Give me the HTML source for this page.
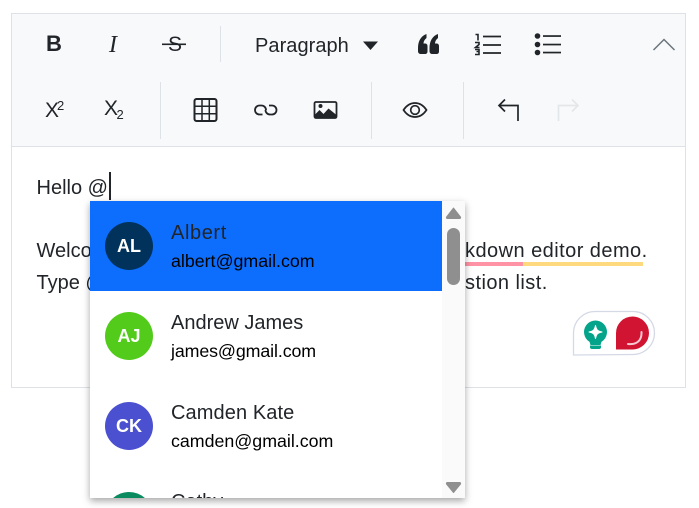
<!DOCTYPE html>
<html>
<head>
<meta charset="utf-8">
<style>
html,body{margin:0;padding:0;background:#fff;}
body{width:699px;height:508px;overflow:hidden;position:relative;font-family:"Liberation Sans",sans-serif;color:#212529;}
.a{position:absolute;white-space:nowrap;}
.t{font-size:20px;line-height:24px;color:#212529;}
.sep{position:absolute;width:1px;background:#dee2e6;}
.name{position:absolute;left:171px;font-size:20px;line-height:24px;color:#212529;white-space:nowrap;}
.mail{position:absolute;left:171px;font-size:17.8px;line-height:20px;color:#000;white-space:nowrap;}
.av{position:absolute;left:105px;width:48px;height:48px;border-radius:50%;color:#fff;font-weight:bold;font-size:18px;line-height:48px;text-align:center;}
svg{position:absolute;overflow:hidden;}
</style>
</head>
<body>
<div class="a" style="left:11px;top:13px;width:673px;height:373px;border:1px solid #dee2e6;"></div>
<div class="a" style="left:12px;top:14px;width:673px;height:132px;background:#f8f9fa;border-bottom:1px solid #dee2e6;"></div>

<div class="sep" style="left:220px;top:26px;height:36px;"></div>
<div class="sep" style="left:160px;top:82px;height:57px;"></div>
<div class="sep" style="left:371px;top:82px;height:57px;"></div>
<div class="sep" style="left:463px;top:82px;height:57px;"></div>

<div class="a" style="left:46px;top:32px;font-size:22px;line-height:24px;font-weight:bold;">B</div>
<div class="a" style="left:109px;top:32px;font-family:'Liberation Serif',serif;font-style:italic;font-size:24px;line-height:26px;">I</div>
<div class="a" style="left:168px;top:33px;font-size:21px;line-height:24px;">S</div>
<svg style="left:0;top:0" width="699" height="200">
  <rect x="162" y="43.5" width="24" height="1.6" fill="#212529"/>
  <!-- dropdown caret -->
  <path d="M363 41.5h15l-7.500 8.500z" fill="#212529"/>
  <!-- quote -->
  <path d="M418 48c0-7 3-12 8.500-14v4c-2 1.500-3 3.500-3 5.500h1.500c1.500 0 2.500 1 2.500 2.500v5.500c0 1.500-1 2.500-2.500 2.500h-4c-1.800 0-3-1-3-3z" fill="#212529"/>
  <path d="M429.500 48c0-7 3-12 8.500-14v4c-2 1.500-3 3.500-3 5.500h1.500c1.500 0 2.500 1 2.500 2.500v5.500c0 1.500-1 2.500-2.500 2.500h-4c-1.800 0-3-1-3-3z" fill="#212529"/>
  <!-- ol -->
  <g stroke="#212529" stroke-width="1.700" fill="none">
    <path d="M483 36.500h18M483 45h18M483 53h18"/>
    <path d="M475.500 34.500h2.500v6M475 42.500h4v2l-3.500 3h4M475 49.500h4v2h-2.500M477 51.500h2v3h-4" stroke-width="1.600"/>
  </g>
  <!-- ul -->
  <g fill="#212529">
    <circle cx="537.500" cy="36" r="2.800"/><circle cx="537.500" cy="44.500" r="2.800"/><circle cx="537.500" cy="52.500" r="2.800"/>
    <rect x="543" y="35.200" width="18" height="1.700"/><rect x="543" y="43.700" width="18" height="1.700"/><rect x="543" y="51.700" width="18" height="1.700"/>
  </g>
  <!-- chevron -->
  <path d="M653.500 50L664 39.500 674.500 50" fill="none" stroke="#6c757d" stroke-width="1.500"/>
  <!-- table -->
  <g fill="none" stroke="#212529">
    <rect x="194.500" y="99" width="22" height="22" rx="2" stroke-width="2"/>
    <path d="M202 99v22M209.300 99v22M194.500 106.300h22M194.500 113.700h22" stroke-width="1.500"/>
  </g>
  <!-- link -->
  <g fill="none" stroke="#212529" stroke-width="1.800">
    <path d="M266 110a4.500 4.500 0 0 0-4.500-4.500h-2a4.500 4.500 0 0 0 0 9h3"/>
    <path d="M265.500 110a4.500 4.500 0 0 0 4.500 4.500h2a4.500 4.500 0 0 0 0-9h-3"/>
  </g>
  <!-- image -->
  <rect x="314.500" y="102" width="22" height="16" rx="1.500" fill="none" stroke="#212529" stroke-width="1.800"/>
  <circle cx="320.500" cy="106" r="2" fill="#212529"/>
  <path d="M314.500 118v-3l5-5 4 4 5-5.500 8 6.500v3z" fill="#212529"/>
  <!-- eye -->
  <path d="M403.500 110c3-4.500 7-7 11.500-7s8.500 2.500 11.500 7c-3 4.500-7 7-11.500 7s-8.500-2.500-11.500-7z" fill="none" stroke="#212529" stroke-width="1.700"/>
  <circle cx="415" cy="110" r="4.300" fill="none" stroke="#212529" stroke-width="1.700"/>
  <!-- undo -->
  <path d="M518 121v-15.500H499M505 99.500l-6 6 6 6" fill="none" stroke="#212529" stroke-width="1.700"/>
  <!-- redo -->
  <path d="M558.500 121v-15.500H578M572 99.500l6 6-6 6" fill="none" stroke="#e4e7ea" stroke-width="1.700"/>
</svg>
<div class="a" style="left:255px;top:34px;font-size:20px;letter-spacing:.05px;line-height:24px;">Paragraph</div>
<div class="a" style="left:45px;top:99px;font-size:21px;line-height:24px;">X</div>
<div class="a" style="left:57px;top:99px;font-size:13px;line-height:14px;">2</div>
<div class="a" style="left:104px;top:97px;font-size:21px;line-height:24px;">X</div>
<div class="a" style="left:116.500px;top:108px;font-size:13px;line-height:14px;">2</div>

<!-- body text -->
<div class="a t" style="left:36.500px;top:176px;">Hello @</div>
<div class="a" style="left:109px;top:172px;width:2px;height:28px;background:#212529;"></div>
<div class="a t" style="left:36.500px;top:239px;">Welcome to the mention integration with mar</div>
<div class="a t" style="left:465px;top:239px;letter-spacing:.45px;">kdown editor demo.</div>
<div class="a t" style="left:36.500px;top:271px;">Type @ character and tag user from the sugge</div>
<div class="a t" style="left:465px;top:271px;letter-spacing:.45px;">stion list.</div>
<div class="a" style="left:465px;top:262px;width:58px;height:4px;background:#ff93a5;"></div>
<div class="a" style="left:523px;top:262px;width:120px;height:4px;background:#ffd97d;"></div>

<!-- widget -->
<svg style="left:0;top:0" width="699" height="508">
  <path d="M573.500 355V333a21.500 21.500 0 0 1 21.500-21.500h38a21.500 21.500 0 0 1 0 43z" fill="#fff" stroke="#d5d9e6" stroke-width="1.300"/>
  <circle cx="595.500" cy="332" r="11.500" fill="#04a48a"/>
  <path d="M589 340h13l-1.500 5h-10z" fill="#04a48a"/>
  <path d="M590 345.500h11v1.500a2 2 0 0 1-2 2h-7a2 2 0 0 1-2-2z" fill="#04a48a"/>
  <path d="M595.500 325.500c1 4.500 2 5.500 6.500 6.500-4.500 1-5.500 2-6.500 6.500-1-4.500-2-5.500-6.500-6.500 4.500-1 5.500-2 6.500-6.500z" fill="#fff" stroke="#fff" stroke-linejoin="round"/>
  <path d="M616 349.500V333a16.500 16.500 0 1 1 16.500 16.500z" fill="#d01432"/>
  <path d="M628 344c8 1 14-3 13.500-12" fill="none" stroke="#f7c9d0" stroke-width="2" stroke-linecap="round"/>
</svg>

<!-- dropdown -->
<div class="a" style="left:90px;top:201px;width:375px;height:297px;background:#fff;box-shadow:0 3px 7px rgba(0,0,0,.35);"></div>
<div class="a" style="left:90px;top:201px;width:375px;height:297px;overflow:hidden;">
  <div class="a" style="left:0;top:0;width:352px;height:90px;background:#0d6efd;"></div>
  <div class="a" style="left:352px;top:0;width:23px;height:297px;background:#fafafa;"></div>
  <div class="a" style="left:357px;top:27px;width:13px;height:57px;border-radius:7px;background:#8f8f8f;"></div>
  <svg style="left:0;top:0" width="375" height="297">
    <path d="M363.500 7l7 9q.5 1.500-1 1.500h-12q-1.500 0-1-1.500z" fill="#8f8f8f" stroke="#8f8f8f" stroke-linejoin="round"/>
    <path d="M363.500 291.500l-7-8.500q-.5-1.500 1-1.500h12q1.500 0 1 1.500z" fill="#8f8f8f" stroke="#8f8f8f" stroke-linejoin="round"/>
    <path d="M23.100 297a24 24 0 0 1 31.800 0z" fill="#0a8a5f"/>
  </svg>
</div>
<div class="av" style="top:222px;background:#00325c;">AL</div>
<div class="name" style="top:221px;letter-spacing:.6px;">Albert</div>
<div class="mail" style="top:251px;">albert@gmail.com</div>
<div class="av" style="top:312px;background:#52cb1a;">AJ</div>
<div class="name" style="top:311px;">Andrew James</div>
<div class="mail" style="top:341px;letter-spacing:-.1px;">james@gmail.com</div>
<div class="av" style="top:402px;background:#4a50d0;">CK</div>
<div class="name" style="top:401px;letter-spacing:.1px;">Camden Kate</div>
<div class="mail" style="top:431px;">camden@gmail.com</div>
<div class="a t" style="left:171px;top:490px;height:8px;overflow:hidden;">Cathy</div>
</body>
</html>
